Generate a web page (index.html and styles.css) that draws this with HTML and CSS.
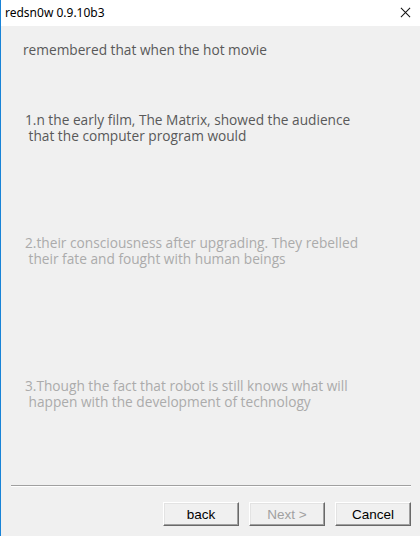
FILE: index.html
```html
<!DOCTYPE html>
<html>
<head>
<meta charset="utf-8">
<link rel="stylesheet" href="styles.css">
</head>
<body>
<div class="window">
  <div class="titlebar">
    <span class="title">redsn0w 0.9.10b3</span>
    <svg class="close" width="12" height="12" viewBox="0 0 12 12"><path d="M1 1 L11 11 M11 1 L1 11" stroke="#111" stroke-width="1.1" fill="none"/></svg>
  </div>
  <div class="content">
    <p class="intro">remembered that when the hot movie</p>
    <p class="item item1"><span class="line">1.n the early film, The Matrix, showed the audience</span><span class="line">&nbsp;that the computer program would</span></p>
    <p class="item item2 dim"><span class="line">2.their consciousness after upgrading. They rebelled</span><span class="line">&nbsp;their fate and fought with human beings</span></p>
    <p class="item item3 dim"><span class="line">3.Though the fact that robot is still knows what will</span><span class="line">&nbsp;happen with the development of technology</span></p>
  </div>
  <div class="footer">
    <div class="sep"></div>
    <div class="buttons">
      <button class="btn">back</button>
      <button class="btn disabled">Next &gt;</button>
      <button class="btn">Cancel</button>
    </div>
  </div>
</div>
</body>
</html>
```
FILE: styles.css
```css
html, body {
  margin: 0;
  padding: 0;
  width: 420px;
  height: 536px;
  overflow: hidden;
  background: #f0f0f0;
}
.window {
  width: 419px;
  height: 536px;
  border-left: 1px solid #1883d7;
  display: flex;
  flex-direction: column;
  background: #f0f0f0;
}
.titlebar {
  height: 26px;
  background: #fff;
  display: flex;
  align-items: center;
  justify-content: space-between;
  padding: 0 9px 0 4px;
  font-family: "Noto Sans", "Liberation Sans", sans-serif;
  font-size: 12px;
  color: #000;
}
.title { position: relative; top: -1px; }
.close { position: relative; top: -1px; width: 11px; height: 11px; }
.content {
  flex: 1;
  padding: 0 0 0 22px;
  font-family: "Open Sans", sans-serif;
  font-size: 13.7px;
  line-height: 16px;
  color: #595959;
}
.content p { margin: 0; }
.line { display: block; height: 16px; }
.intro { margin-top: 16px !important; }
.item1 { margin-top: 54px !important; padding-left: 2px; }
.item2 { margin-top: 91px !important; padding-left: 2px; }
.item3 { margin-top: 111px !important; padding-left: 2px; }
.dim { color: #ababab; }
.footer {
  padding: 0 9px 10px 10px;
}
.sep {
  height: 1px;
  background: #a0a0a0;
  border-bottom: 1px solid #fff;
}
.buttons {
  display: flex;
  justify-content: flex-end;
  gap: 10px;
  margin-top: 15px;
}
.btn {
  width: 76px;
  height: 24px;
  padding: 0;
  margin: 0;
  background: #f0f0f0;
  border: 1px solid;
  border-color: #fff #696969 #696969 #fff;
  box-shadow: inset -1px -1px #a0a0a0, inset 1px 1px #e3e3e3;
  font-family: "Liberation Sans", sans-serif;
  font-size: 13.5px;
  color: #000;
}
.btn.disabled { color: #a0a0a0; }
```
